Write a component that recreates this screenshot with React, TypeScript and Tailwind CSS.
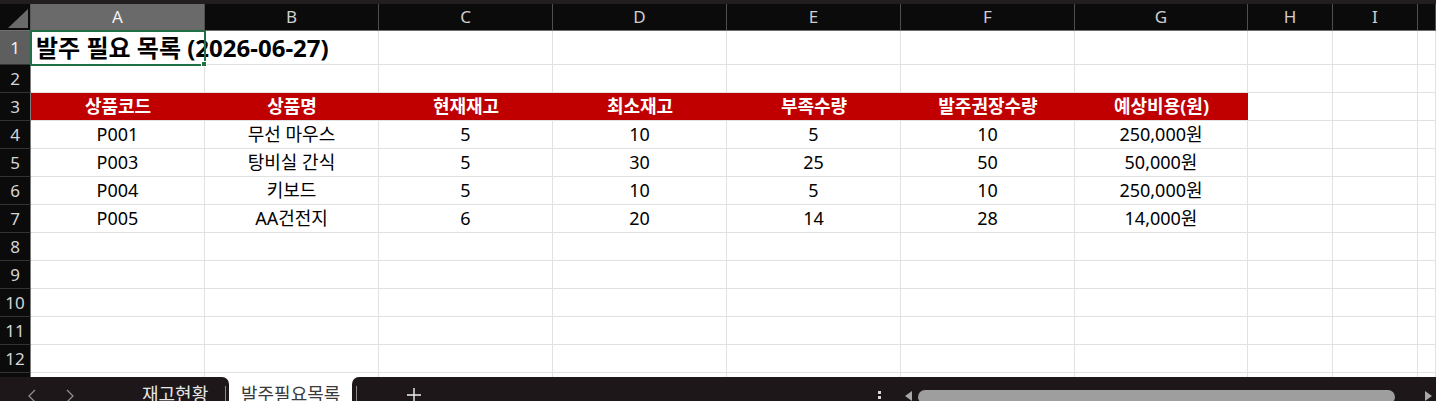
import React from "react";

const FONT = { fontFamily: '"Noto Sans", "Noto Sans CJK KR", sans-serif' };

// Column widths of the sheet (A..J)
const COLS = [
  { key: "A", w: "w-[174px]" },
  { key: "B", w: "w-[174px]" },
  { key: "C", w: "w-[174px]" },
  { key: "D", w: "w-[174px]" },
  { key: "E", w: "w-[174px]" },
  { key: "F", w: "w-[174px]" },
  { key: "G", w: "w-[173px]" },
  { key: "H", w: "w-[85px]" },
  { key: "I", w: "w-[85px]" },
  { key: "J", w: "flex-1" },
];

const HEAD = ["상품코드", "상품명", "현재재고", "최소재고", "부족수량", "발주권장수량", "예상비용(원)"];

const ROWS = [
  ["P001", "무선 마우스", "5", "10", "5", "10", "250,000원"],
  ["P003", "탕비실 간식", "5", "30", "25", "50", "50,000원"],
  ["P004", "키보드", "5", "10", "5", "10", "250,000원"],
  ["P005", "AA건전지", "6", "20", "14", "28", "14,000원"],
];

function RowHeader({ n, h, active }: { n: number; h: string; active?: boolean }) {
  return (
    <div
      className={`${h} w-[31px] shrink-0 flex items-center justify-center border-r border-r-[#7a7a7a] border-b border-b-[#333333] text-[17px] ${
        active ? "bg-[#5e5e5e] text-[#f0f0f0]" : "bg-[#0b0b0b] text-[#d6d6d6]"
      }`}
    >
      {n}
    </div>
  );
}

function EmptyRow({ n }: { n: number }) {
  return (
    <div className="flex h-[28px]">
      <RowHeader n={n} h="h-[28px]" />
      {COLS.map((c) => (
        <div key={c.key} className={`${c.w} shrink-0 h-[28px] border-r border-b border-[#e1e1e1]`} />
      ))}
    </div>
  );
}

export default function App() {
  return (
    <div className="w-[1436px] h-[401px] overflow-hidden bg-white relative" style={FONT}>
      {/* window strip */}
      <div className="h-[4px] bg-[#221d1f]" />

      <div className="h-[373px] overflow-hidden">
        {/* column letters */}
        <div className="flex h-[27px] bg-[#0b0b0b] border-b border-[#6e6e6e]">
          <div className="w-[31px] shrink-0 relative border-r border-[#5a5a5a]">
            <svg className="absolute left-0 top-0" width="31" height="27" viewBox="0 0 31 27">
              <polygon points="8,24 28,24 28,5" fill="#6a6a6a" />
            </svg>
          </div>
          {COLS.map((c) => (
            <div
              key={c.key}
              className={`${c.w} shrink-0 flex items-center justify-center border-r border-[#4f4f4f] text-[17px] ${
                c.key === "A" ? "bg-[#6a6a6a] text-[#f2f2f2]" : "text-[#cfcfcf]"
              }`}
            >
              {c.key !== "J" ? c.key : ""}
            </div>
          ))}
        </div>

        {/* row 1: title */}
        <div className="flex h-[34px]">
          <RowHeader n={1} h="h-[34px]" active />
          {COLS.map((c, i) => (
            <div
              key={c.key}
              className={`${c.w} shrink-0 h-[34px] border-r border-b border-[#e1e1e1] relative`}
            >
              {i === 0 && (
                <>
                  <span className="absolute left-[5px] top-0 h-[34px] flex items-center whitespace-nowrap text-[24px] font-bold text-black z-10">
                    발주 필요 목록 (2026-06-27)
                  </span>
                  <div className="absolute -left-[1px] -top-[1px] w-[176px] h-[36px] border-2 border-[#1f7145] z-20" />
                  <div className="absolute left-[170px] top-[30px] w-[6px] h-[6px] bg-[#1f7145] border border-white z-30" />
                </>
              )}
            </div>
          ))}
        </div>

        <EmptyRow n={2} />

        {/* row 3: table header */}
        <div className="flex h-[28px]">
          <RowHeader n={3} h="h-[28px]" />
          {COLS.map((c, i) =>
            i < HEAD.length ? (
              <div
                key={c.key}
                className={`${c.w} shrink-0 h-[28px] bg-[#c00000] border-b border-b-[#e1e1e1] flex items-center justify-center text-white font-bold text-[18px]`}
              >
                {HEAD[i]}
              </div>
            ) : (
              <div key={c.key} className={`${c.w} shrink-0 h-[28px] border-r border-b border-[#e1e1e1]`} />
            )
          )}
        </div>

        {/* rows 4-7: data */}
        {ROWS.map((r, ri) => (
          <div key={ri} className="flex h-[28px]">
            <RowHeader n={ri + 4} h="h-[28px]" />
            {COLS.map((c, i) => (
              <div
                key={c.key}
                className={`${c.w} shrink-0 h-[28px] border-r border-b border-[#e1e1e1] flex items-center justify-center text-[18px] text-black`}
              >
                {i < r.length ? r[i] : ""}
              </div>
            ))}
          </div>
        ))}

        {[8, 9, 10, 11, 12, 13].map((n) => (
          <EmptyRow key={n} n={n} />
        ))}
      </div>

      {/* sheet tabs & scrollbar */}
      <div className="flex h-[36px] bg-white text-[18px]">
        <div className="w-[229px] shrink-0 bg-[#1d171a] rounded-tr-[7px] relative">
          <svg className="absolute left-[28px] top-[12px]" width="8" height="14" viewBox="0 0 8 14">
            <polyline points="7,1 1,7 7,13" fill="none" stroke="#8f8f8f" strokeWidth="1.3" />
          </svg>
          <svg className="absolute left-[66px] top-[12px]" width="8" height="14" viewBox="0 0 8 14">
            <polyline points="1,1 7,7 1,13" fill="none" stroke="#8f8f8f" strokeWidth="1.3" />
          </svg>
          <span className="absolute left-[142px] top-[4px] text-[#e6e6e6]">재고현황</span>
          <div className="absolute left-[225px] top-[9px] w-[1px] h-[20px] bg-[#8a8a8a]" />
        </div>
        <div className="w-[123px] shrink-0 bg-white relative">
          <span className="absolute left-[12px] top-[4px] text-[#3a3a3a]">발주필요목록</span>
        </div>
        <div className="flex-1 bg-[#1d171a] rounded-tl-[7px] relative">
          <div className="absolute left-[4px] top-[9px] w-[1px] h-[20px] bg-[#8a8a8a]" />
          <svg className="absolute left-[55px] top-[11px]" width="14" height="14" viewBox="0 0 14 14">
            <path d="M7 0V14M0 7H14" stroke="#f0f0f0" strokeWidth="1.4" />
          </svg>
          <div className="absolute left-[526px] top-[14px] flex flex-col gap-[2px]">
            <div className="w-[3px] h-[3px] bg-[#d8d8d8]" />
            <div className="w-[3px] h-[3px] bg-[#d8d8d8]" />
            <div className="w-[3px] h-[3px] bg-[#d8d8d8]" />
          </div>
          <svg className="absolute left-[553px] top-[14px]" width="7" height="10" viewBox="0 0 7 10">
            <polygon points="7,0 7,10 0,5" fill="#a8a8a8" />
          </svg>
          <div className="absolute left-[566px] top-[13px] w-[477px] h-[14px] rounded-full bg-[#9e9e9e]" />
          <svg className="absolute left-[1073px] top-[14px]" width="7" height="10" viewBox="0 0 7 10">
            <polygon points="0,0 0,10 7,5" fill="#a8a8a8" />
          </svg>
        </div>
      </div>
    </div>
  );
}
